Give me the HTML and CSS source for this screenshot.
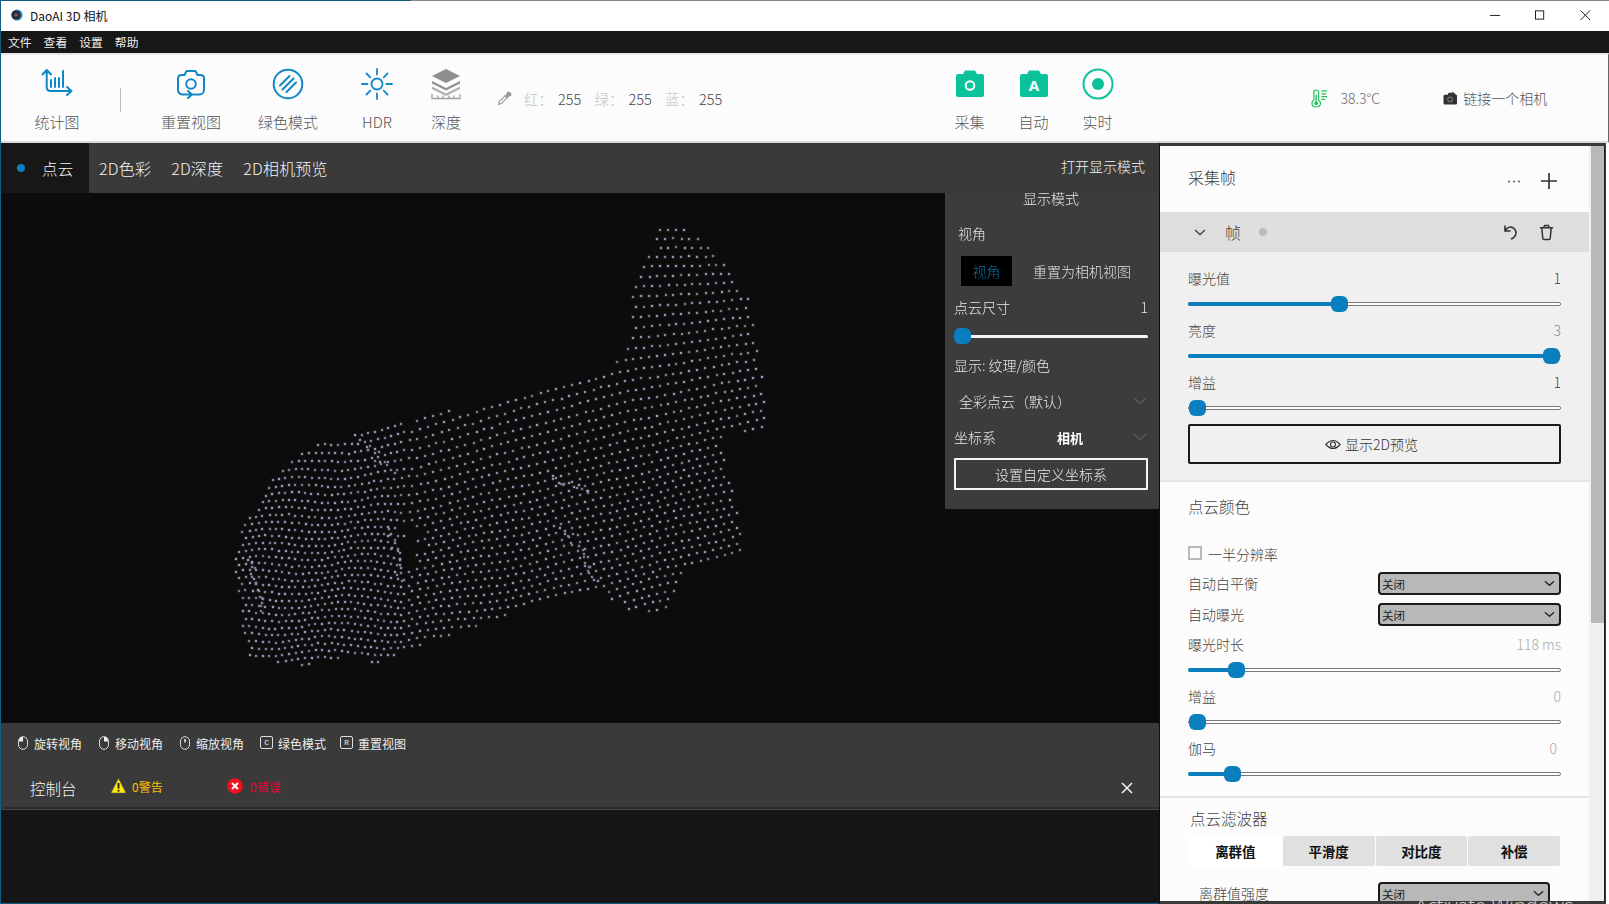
FILE: index.html
```html
<!DOCTYPE html>
<html lang="zh-CN">
<head>
<meta charset="utf-8">
<title>DaoAI 3D 相机</title>
<link rel="stylesheet" href="styles.css">
</head>
<body>
<div class="window">
  <div class="topline"></div>
  <header class="titlebar">
    <svg class="app-icon" viewBox="0 0 12 12"><circle cx="6" cy="6" r="5.5" fill="#1c8ac0"/><circle cx="5" cy="6" r="4.6" fill="#2a2a33"/><circle cx="5" cy="6" r="1.8" fill="#8a5560"/></svg>
    <span class="app-title">DaoAI 3D 相机</span>
    <div class="winctl">
      <svg viewBox="0 0 12 12"><path d="M0 6.5H11" stroke="#111" fill="none"/></svg>
      <svg viewBox="0 0 12 12"><rect x=".5" y="1.500" width="9" height="9" stroke="#111" fill="none"/></svg>
      <svg viewBox="0 0 12 12"><path d="M.5 1L11 11.500M11 1L.5 11.500" stroke="#111" fill="none"/></svg>
    </div>
  </header>
  <nav class="menubar"><span>文件</span><span>查看</span><span>设置</span><span>帮助</span></nav>

  <section class="toolbar">
    <div class="tool tool-chart">
      <svg viewBox="0 0 32 32" class="ico blue"><path d="M1.500 6.500L5.700 2L10 6.500M5.700 2V19Q5.700 23 9.700 23H30M26 19L30.500 23L26 27M10 12V19M14 10V19M18 10V19M22 3V19"/></svg>
      <span>统计图</span>
    </div>
    <div class="tool-sep"></div>
    <div class="tool tool-reset">
      <svg viewBox="0 0 32 32" class="ico blue"><path d="M7 26.500C4.500 26 3 24 3 21.500V10.500C3 8.500 4.500 7 6.500 7H9.500L11.500 3H20.500L22.500 7H25.500C27.500 7 29 8.500 29 10.500V21.500C29 24.500 27 26.500 24.500 26.500H18M8 26.500H16.500M13 23L17 26.500L13 30"/><circle cx="16" cy="16" r="4.800"/></svg>
      <span>重置视图</span>
    </div>
    <div class="tool tool-green">
      <svg viewBox="0 0 32 32" class="ico blue"><circle cx="16" cy="16" r="14.300"/><path d="M8 17.500L17.500 8M10.500 21.500L21.500 10.500M14.500 24L24 14.500"/></svg>
      <span>绿色模式</span>
    </div>
    <div class="tool tool-hdr">
      <svg viewBox="0 0 32 32" class="ico blue thin"><circle cx="16" cy="16" r="5.500"/><path d="M16 1V6.500M16 25.500V31M1 16H6.500M25.500 16H31M5.500 5.500L9.300 9.300M22.700 22.700L26.500 26.500M26.500 5.500L22.700 9.300M9.300 22.700L5.500 26.500"/></svg>
      <span>HDR</span>
    </div>
    <div class="tool tool-depth">
      <svg viewBox="0 0 32 32"><path d="M16 1L30 8L16 15L2 8Z" fill="#8f8f8f"/><path d="M2 13L16 20L30 13V15.500L16 22.500L2 15.500Z" fill="#8f8f8f"/><path d="M2 18.500L16 25.500L30 18.500V21L16 28L2 21Z" fill="#b0b0b0"/><path d="M2 26V30.500H30V26M8 27.500V30M13 27.500V30M19 27.500V30M24 27.500V30" stroke="#a0a0a0" stroke-width="1.300" fill="none"/></svg>
      <span>深度</span>
    </div>
    <div class="rgb">
      <svg viewBox="0 0 16 16" class="dropper"><path d="M1.500 14.500L2.500 11.500L8 6L10 8L4.500 13.500Z" fill="none" stroke="#aaa" stroke-width="1.400"/><path d="M6.500 4.500L8.500 5.500L10.500 1.800C12 .3 15.700 4 14.200 5.500L10.500 7.500L11.500 9.500Z" fill="#999"/></svg>
      <span class="rgb-key rgb-key-first">红：</span><span class="rgb-val">255</span>
      <span class="rgb-key">绿：</span><span class="rgb-val">255</span>
      <span class="rgb-key">蓝：</span><span class="rgb-val">255</span>
    </div>
    <div class="tool tool-capture">
      <svg viewBox="0 0 32 32"><path d="M4 6H9L11 2.500H21L23 6H28Q30 6 30 8V27Q30 29 28 29H4Q2 29 2 27V8Q2 6 4 6Z" fill="#0cc29b"/><circle cx="16" cy="17.500" r="4.300" fill="none" stroke="#fff" stroke-width="2"/></svg>
      <span>采集</span>
    </div>
    <div class="tool tool-auto">
      <svg viewBox="0 0 32 32"><path d="M4 6H9L11 2.500H21L23 6H28Q30 6 30 8V27Q30 29 28 29H4Q2 29 2 27V8Q2 6 4 6Z" fill="#0cc29b"/><text x="16" y="23" class="auto-letter">A</text></svg>
      <span>自动</span>
    </div>
    <div class="tool tool-live">
      <svg viewBox="0 0 32 32"><circle cx="16" cy="16" r="14.500" fill="none" stroke="#0cc29b" stroke-width="2"/><circle cx="16" cy="16" r="6" fill="#0cc29b"/></svg>
      <span>实时</span>
    </div>
    <div class="temp">
      <svg viewBox="0 0 18 20" class="thermo"><path d="M3 3Q3 1 5 1Q8 1 8 3V11.500Q10 13 10 15Q10 19 5.500 19Q1 19 1 15Q1 13 3 11.500Z" fill="none" stroke="#22c35e" stroke-width="1.300"/><path d="M5.500 6V13" stroke="#22c35e" stroke-width="1.500"/><circle cx="5.500" cy="15" r="2" fill="#22c35e"/><path d="M11 2H17M11 5H16M11 8H17M11 11H15" stroke="#22c35e" stroke-width="1.300"/></svg>
      <span>38.3°C</span>
    </div>
    <div class="connect">
      <svg viewBox="0 0 16 15" class="cam-dark"><path d="M2 4H5L6 2H10V0.500L14 4Q15 4 15 5V13Q15 14.500 13.500 14.500H2Q.5 14.500 .5 13V5.500Q.5 4 2 4Z" fill="#333"/><circle cx="7.500" cy="9" r="2.500" fill="none" stroke="#777" stroke-width="1.200"/></svg>
      <span>链接一个相机</span>
    </div>
  </section>

  <main class="main">
    <div class="left">
      <div class="tabs">
        <div class="tab tab-active"><i class="tab-dot"></i><span>点云</span></div>
        <div class="tab">2D色彩</div>
        <div class="tab">2D深度</div>
        <div class="tab">2D相机预览</div>
        <div class="open-mode">打开显示模式</div>
      </div>
      <div class="viewport">
        <canvas id="cloud" width="1158" height="530"></canvas>
        <aside class="mode-panel">
          <div class="mode-title">显示模式</div>
          <div class="mode-view">视角</div>
          <div class="mode-btns"><span class="view-btn">视角</span><span class="reset-cam">重置为相机视图</span></div>
          <div class="mode-size"><span>点云尺寸</span><span>1</span></div>
          <div class="mode-slider"><div class="track track-white"><i class="thumb" style="left:0"></i></div></div>
          <div class="mode-display">显示: 纹理/颜色</div>
          <div class="mode-drop"><span>全彩点云（默认）</span><svg viewBox="0 0 14 8" class="faint-chev"><path d="M1 1L7 6.500L13 1"/></svg></div>
          <div class="mode-coord"><span>坐标系</span><b>相机</b><svg viewBox="0 0 14 8" class="faint-chev"><path d="M1 1L7 6.500L13 1"/></svg></div>
          <div class="mode-custom">设置自定义坐标系</div>
        </aside>
      </div>
      <div class="hints">
        <div class="hint"><svg viewBox="0 0 12 14" class="hint-ico"><rect x="1.500" y=".7" width="9" height="12.600" rx="4.500" fill="none" stroke="#ddd"/><path d="M6 1H4.500Q2 1.500 2 5.500H6Z" fill="#eee"/></svg><span>旋转视角</span></div>
        <div class="hint"><svg viewBox="0 0 12 14" class="hint-ico"><rect x="1.500" y=".7" width="9" height="12.600" rx="4.500" fill="none" stroke="#ddd"/><path d="M6 1H7.500Q10 1.500 10 5.500H6Z" fill="#eee"/></svg><span>移动视角</span></div>
        <div class="hint"><svg viewBox="0 0 12 14" class="hint-ico"><rect x="1.500" y=".7" width="9" height="12.600" rx="4.500" fill="none" stroke="#ddd"/><path d="M6 3V6.500" stroke="#eee" stroke-width="1.500"/></svg><span>缩放视角</span></div>
        <div class="hint hint-k"><b class="key">C</b><span>绿色模式</span></div>
        <div class="hint hint-k"><b class="key">R</b><span>重置视图</span></div>
      </div>
      <div class="console-head">
        <span class="console-title">控制台</span>
        <svg viewBox="0 0 16 16" class="warn-ico"><path d="M8 .5L15.500 15H.5Z" fill="#ffea00" stroke="#666" stroke-width=".6"/><path d="M8 5V10.500M8 11.800V13.500" stroke="#111" stroke-width="1.800"/></svg>
        <span class="warn-text">0警告</span>
        <svg viewBox="0 0 16 16" class="err-ico"><circle cx="8" cy="8" r="7.800" fill="#ee1122"/><path d="M5 5L11 11M11 5L5 11" stroke="#fff" stroke-width="2"/></svg>
        <span class="err-text">0错误</span>
        <svg viewBox="0 0 12 12" class="close-ico"><path d="M1 1L11 11M11 1L1 11"/></svg>
      </div>
      <div class="console-sep"></div>
      <div class="console-body"></div>
    </div>

    <div class="right">
      <div class="panel">
        <div class="p-head"><span>采集帧</span><svg viewBox="0 0 14 3" class="p-dots"><circle cx="2" cy="1.500" r="1"/><circle cx="7" cy="1.500" r="1"/><circle cx="12" cy="1.500" r="1"/></svg><svg viewBox="0 0 16 16" class="p-plus"><path d="M8 0V16M0 8H16"/></svg></div>
        <div class="frame-head">
          <svg viewBox="0 0 12 7" class="frame-chev"><path d="M1 1L6 5.500L11 1"/></svg>
          <span class="frame-name">帧</span>
          <i class="frame-dot"></i>
          <svg viewBox="0 0 18 18" class="frame-undo"><path d="M4 2.500V8H9.500M4.500 7.500C6 4.500 9 3.500 11.500 4.500C15 6 16 10 14 13C13 14.500 11.500 15.500 10 16"/></svg>
          <svg viewBox="0 0 16 18" class="frame-trash"><path d="M1 4H15M5 4L6 1.500H10L11 4M3 4L4 15Q4 16.500 5.500 16.500H10.500Q12 16.500 12 15L13 4"/></svg>
        </div>
        <section class="sec-frame">
          <div class="param"><div class="param-line"><span>曝光值</span><span>1</span></div><div class="track"><i class="fill" style="width:151px"></i><i class="thumb" style="left:142px"></i></div></div>
          <div class="param"><div class="param-line"><span>亮度</span><span class="muted-dark">3</span></div><div class="track"><i class="fill" style="width:363px"></i><i class="thumb" style="left:354px"></i></div></div>
          <div class="param"><div class="param-line"><span>增益</span><span>1</span></div><div class="track"><i class="thumb" style="left:0"></i></div></div>
          <div class="preview-btn"><svg viewBox="0 0 18 12" class="eye"><path d="M1 6Q9 -3 17 6Q9 15 1 6Z"/><circle cx="9" cy="6" r="2.800"/></svg><span>显示2D预览</span></div>
        </section>
        <section class="sec-color">
          <div class="sec-title">点云颜色</div>
          <div class="check-row"><i class="check"></i><span>一半分辨率</span></div>
          <div class="sel-row"><span>自动白平衡</span><div class="sel"><span>关闭</span><svg viewBox="0 0 12 7"><path d="M1 1L6 5.500L11 1"/></svg></div></div>
          <div class="sel-row"><span>自动曝光</span><div class="sel"><span>关闭</span><svg viewBox="0 0 12 7"><path d="M1 1L6 5.500L11 1"/></svg></div></div>
          <div class="param param-first"><div class="param-line"><span>曝光时长</span><span class="muted">118 ms</span></div><div class="track"><i class="fill" style="width:49px"></i><i class="thumb" style="left:39px"></i></div></div>
          <div class="param"><div class="param-line"><span>增益</span><span class="muted">0</span></div><div class="track"><i class="thumb" style="left:0"></i></div></div>
          <div class="param"><div class="param-line"><span>伽马</span><span class="muted val-in">0</span></div><div class="track"><i class="fill" style="width:44px"></i><i class="thumb" style="left:35px"></i></div></div>
        </section>
        <section class="sec-filter">
          <div class="sec-title-sm">点云滤波器</div>
          <div class="ftabs"><span class="ftab ftab-on">离群值</span><span class="ftab">平滑度</span><span class="ftab">对比度</span><span class="ftab">补偿</span></div>
          <div class="sel-row sel-row-in"><span>离群值强度</span><div class="sel"><span>关闭</span><svg viewBox="0 0 12 7"><path d="M1 1L6 5.500L11 1"/></svg></div></div>
        </section>
      </div>
      <div class="scroll"><i class="scroll-thumb"></i></div>
      <div class="activate">Activate Windows</div>
    </div>
  </main>
</div>
<script src="script.js"></script>
</body>
</html>
```

FILE: styles.css
```css
* { box-sizing: border-box; }
html, body { margin: 0; padding: 0; height: 100%; overflow: hidden; background: #fff; }
body { font-family: "Noto Sans CJK SC", "Noto Sans", sans-serif; font-weight: 300; font-size: 14px; color: #444; }
svg { display: block; flex: none; }
.window { width: 1609px; height: 904px; display: flex; flex-direction: column; border-left: 1px solid #155a7f; overflow: hidden; }
.topline { height: 1px; background: linear-gradient(90deg, #155a7f 0 410px, #8a8a8a 410px); }

.titlebar { height: 30px; display: flex; align-items: center; background: #fff; padding: 0 0 2px 10px; }
.app-icon { width: 12px; height: 12px; }
.app-title { margin-left: 7px; font-size: 12px; font-weight: 400; color: #111; }
.winctl { margin-left: auto; display: flex; gap: 34px; margin-right: 18px; }
.winctl svg { width: 11px; height: 12px; }

.menubar { height: 22px; background: #171717; color: #f0f0f0; display: flex; align-items: center; gap: 12px; padding: 0 0 2px 7px; font-size: 11.800px; font-weight: 400; }

.toolbar { height: 90px; background: #fcfcfc; border-top: 2px solid #e6e6e6; border-bottom: 2px solid #dadada; border-right: 1px solid #666; display: flex; color: #555; position: relative; }
.tool { display: flex; flex-direction: column; align-items: center; width: 60px; padding-top: 13px; font-size: 15px; }
.tool svg { width: 32px; height: 32px; }
.tool span { margin-top: 10px; line-height: 24px; white-space: nowrap; }
.ico { fill: none; stroke-width: 2; stroke-linecap: round; stroke-linejoin: round; }
.ico.blue { stroke: #1088c8; }
.ico.thin { stroke-width: 1.800; }
.tool-chart { margin-left: 26px; }
.tool-sep { width: 1px; height: 24px; background: #bbb; margin: 33px 0 0 33px; }
.tool-reset { margin-left: 40px; }
.tool-green { margin-left: 37px; }
.tool-hdr { margin-left: 29px; }
.tool-depth { margin-left: 9px; }
.rgb { display: flex; align-items: center; height: 90px; margin-top: -2px; margin-left: 21px; font-size: 14.500px; }
.dropper { width: 16px; height: 16px; }
.rgb-key { color: #c4c4c4; width: 30px; }
.rgb-key-first { margin-left: 11px; }
.rgb-val { color: #444; width: 40.500px; padding-left: 4px; }
.tool-capture { margin-left: 204px; margin-right: 4px; }
.tool-auto { margin-right: 4px; }
.temp { display: flex; align-items: center; height: 86px; margin-left: 183px; gap: 13px; font-size: 14px; color: #666; }
.thermo { width: 17px; height: 19px; }
.connect { display: flex; align-items: center; height: 86px; margin-left: 63px; gap: 5px; font-size: 14px; color: #555; }
.cam-dark { width: 15px; height: 14px; }
.auto-letter { font-size: 15px; font-weight: 700; fill: #fff; text-anchor: middle; font-family: "Noto Sans", sans-serif; }

.main { flex: 1; display: flex; min-height: 0; }
.left { width: 1158px; display: flex; flex-direction: column; background: #3a3a3a; flex: none; }
.tabs { height: 50px; display: flex; align-items: center; background: #3a3a3a; color: #f4f4f4; font-size: 16px; letter-spacing: .2px; }
.tab { padding: 0 10px; line-height: 50px; height: 50px; white-space: nowrap; }
.tab-active { width: 88px; background: #171717; display: flex; align-items: center; padding: 0 0 0 16px; font-size: 15.500px; }
.tab-dot { width: 8px; height: 8px; background: #0a7fc4; border-radius: 50%; margin-right: 17px; }
.open-mode { margin-left: auto; margin-right: 14px; font-size: 14px; margin-top: -5px; letter-spacing: 0; }
.viewport { position: relative; height: 530px; background: #0c0c0c; }
#cloud { display: block; }
.mode-panel { position: absolute; right: -1px; top: 0; width: 215px; height: 316px; background: #3c3c3c; color: #e8e8e8; font-size: 14px; padding: 0 12px 0 9px; }
.mode-title { height: 29px; margin-top: -2px; line-height: 14px; text-align: center; }
.mode-view { height: 26px; line-height: 26px; padding-left: 4px; }
.mode-btns { display: flex; align-items: center; height: 30px; margin-top: 10px; padding-left: 7px; }
.view-btn { width: 51px; height: 30px; line-height: 30px; text-align: center; background: #000; color: #0a6ea8; }
.reset-cam { margin-left: 21px; color: #e0e0e0; }
.mode-size { display: flex; justify-content: space-between; margin-top: 7px; line-height: 28px; height: 28px; }
.mode-slider { height: 16px; margin-top: 7px; display: flex; align-items: center; }
.mode-display { margin-top: 3px; height: 30px; line-height: 36px; }
.mode-drop { height: 36px; margin-top: 3px; padding: 6px 0 0 5px; display: flex; align-items: center; justify-content: space-between; }
.mode-coord { height: 36px; margin-top: 3px; display: flex; align-items: center; }
.mode-coord b { margin-left: 61px; font-size: 13px; font-weight: 700; color: #fff; }
.faint-chev { width: 14px; height: 8px; fill: none; stroke: #5e5e5e; stroke-width: 1.200; margin-left: auto; margin-right: 1px; }
.mode-custom { height: 32px; margin-top: 3px; border: 2px solid #f4f4f4; text-align: center; line-height: 28px; border-radius: 1px; }

.hints { height: 44px; display: flex; align-items: center; padding: 0 0 4px 16px; color: #eee; font-size: 12px; font-weight: 400; background: #3a3a3a; }
.hint { display: flex; align-items: center; margin-right: 16px; height: 16px; }
.hint-ico { width: 12px; height: 14px; margin-right: 5px; margin-top: -1px; }
.hint-k { margin-right: 14px; }
.key { width: 13px; height: 13px; border: 1px solid #ddd; border-radius: 2px; font-size: 8px; line-height: 11px; text-align: center; margin: -1px 5px 0 0; font-family: "Liberation Mono", monospace; font-weight: 400; }
.console-head { height: 40px; display: flex; align-items: center; padding: 2px 0 0 29px; color: #f4f4f4; }
.console-title { font-size: 15.500px; width: 80px; }
.warn-ico { width: 17px; height: 16px; margin-top: -5px; }
.warn-text { color: #ffc000; font-size: 12px; margin-left: 5px; width: 95px; font-weight: 400; margin-top: -3px; }
.err-ico { width: 16px; height: 16px; margin-top: -5px; }
.err-text { color: #ee0033; font-size: 12px; margin-left: 7px; font-weight: 400; margin-top: -3px; }
.close-ico { width: 12px; height: 12px; fill: none; stroke: #f4f4f4; stroke-width: 1.500; margin-left: auto; margin-right: 26px; }
.console-sep { height: 3px; background: #2a2a2a; border-bottom: 1px solid #4a4a4a; margin-left: 3px; }
.console-body { flex: 1; background: #161616; border-bottom: 1px solid #155a7f; }

.right { flex: 1; position: relative; display: flex; background: #3a3a3a; border-left: 1px solid #111; padding: 3px 4px 3px 0; overflow: hidden; border-right: 3px solid #fff; }
.panel { width: 429px; background: #fcfcfc; overflow: hidden; flex: none; }
.p-head { height: 66px; display: flex; align-items: center; padding: 0 32px 0 28px; font-size: 16px; color: #333; }
.p-head > span:first-child { margin-top: -4px; }
.p-dots { width: 14px; height: 3px; margin-left: auto; margin-right: 20px; fill: #555; margin-top: 5px; }
.p-plus { width: 16px; height: 16px; fill: none; stroke: #333; stroke-width: 1.700; margin-top: 4px; }
.frame-head { height: 40px; background: #dedede; display: flex; align-items: center; color: #444; font-size: 16px; }
.frame-chev { width: 12px; height: 7px; margin-left: 34px; fill: none; stroke: #444; stroke-width: 1.400; }
.frame-name { margin-left: 19px; }
.frame-dot { width: 8px; height: 8px; background: #bbb; border-radius: 50%; margin-left: 18px; }
.frame-undo { width: 18px; height: 18px; margin-left: auto; fill: none; stroke: #333; stroke-width: 1.600; }
.frame-trash { width: 15px; height: 17px; margin-left: 20px; margin-right: 35px; fill: none; stroke: #333; stroke-width: 1.600; }
.sec-frame { background: #f0f0f0; padding: 14px 28px 16px; border-bottom: 2px solid #e4e4e4; height: 230px; }
.param { height: 52px; }
.param-line { display: flex; justify-content: space-between; height: 26px; line-height: 24px; color: #444; }
.muted { color: #aaa; }
.muted-dark { color: #888; }
.val-in { margin-right: 4px; }
.track { position: relative; height: 4px; margin-top: 10px; border: 1px solid #777; border-radius: 2px; background: #fff; }
.track-white { flex: 1; margin-top: 0; height: 3px; background: #f4f4f4; border: 0; }
.fill { position: absolute; left: -1px; top: -1px; height: 4px; background: #0a7fc0; border-radius: 2px; }
.thumb { position: absolute; top: 50%; width: 17px; height: 16px; margin-top: -8px; background: #0a7fc0; border-radius: 6px; }
.preview-btn { height: 40px; margin-top: 2px; padding-right: 6px; border: 2px solid #1a1a1a; border-radius: 2px; display: flex; align-items: center; justify-content: center; gap: 4px; color: #333; }
.eye { width: 16px; height: 11px; fill: none; stroke: #333; stroke-width: 1.300; }
.sec-color { padding: 0 28px; height: 316px; border-bottom: 2px solid #e4e4e4; }
.sec-title { height: 52px; line-height: 49px; font-size: 15.500px; color: #444; }
.check-row { height: 28px; margin-top: 6px; display: flex; align-items: center; gap: 6px; }
.check { width: 14px; height: 14px; border: 2px solid #bbb; margin-top: -2px; }
.sel-row { height: 31px; display: flex; align-items: center; justify-content: space-between; }
.sel-row > span { margin-top: -2px; }
.sel { width: 183px; height: 23px; background: #b8b8b8; border: 2px solid #1a1a1a; border-radius: 4px; display: flex; align-items: center; justify-content: space-between; padding: 0 4px 0 2px; font-size: 11.500px; color: #222; font-weight: 400; }
.sel svg { width: 11px; height: 7px; fill: none; stroke: #222; stroke-width: 1.400; }
.param-first { margin-top: 2px; }
.sec-filter { padding: 0 28px; }
.sec-title-sm { height: 38px; padding: 5px 0 0 2px; line-height: 30px; font-size: 15.500px; color: #444; }
.ftabs { display: grid; grid-template-columns: repeat(4, 1fr); height: 30px; margin: 0 1px; color: #111; font-weight: 700; font-size: 13.500px; }
.ftab { background: #e0e0e0; text-align: center; line-height: 30px; border-radius: 2px; margin-left: 1px; }
.ftab-on { background: #fff; margin-left: 0; }
.sel-row-in { margin-top: 16px; padding-left: 11px; margin-right: 11px; height: 23px; color: #444; }
.sel-row-in .sel { width: 172px; }
.scroll { width: 16px; background: #f0f0f0; flex: none; position: relative; border-right: 1px solid #222; }
.scroll-thumb { display: block; width: 13px; height: 477px; background: #b8b8b8; margin-left: 2px; }
.activate { position: absolute; left: 255px; bottom: -15px; font-size: 20px; color: #c8c8c8; font-family: "Noto Sans", sans-serif; white-space: nowrap; }
```

FILE: script.js
```js
(function () {
  var cv = document.getElementById('cloud');
  var ctx = cv.getContext('2d');
  var OX = 1, OY = 193;
  var poly = [[657,223],[663,221],[672,227],[694,231],[703,237],[714,250],[726,262],[738,283],[748,297],[754,332],[757,348],[762,374],[764,392],[767,400],[763,424],[766,433],[722,427],[720,440],[730,483],[737,510],[744,553],[690,568],[669,598],[672,612],[627,612],[608,597],[598,588],[513,612],[480,623],[462,630],[420,645],[380,660],[370,664],[357,652],[312,664],[283,664],[247,655],[243,638],[240,603],[232,564],[240,532],[257,499],[273,476],[290,457],[315,442],[339,436],[357,434],[397,423],[430,415],[478,402],[502,395],[572,377],[610,366],[617,356],[626,341],[629,316],[630,293],[636,284],[642,267],[647,257],[653,248],[652,232]];
  var seed = 12345;
  function rnd() {
    seed = (seed * 1664525 + 1013904223) >>> 0;
    return seed / 4294967296;
  }
  function inside(x, y) {
    var c = false;
    for (var i = 0, j = poly.length - 1; i < poly.length; j = i++) {
      var a = poly[i], b = poly[j];
      if ((a[1] > y) !== (b[1] > y) && x < (b[0] - a[0]) * (y - a[1]) / (b[1] - a[1]) + a[0]) c = !c;
    }
    return c;
  }
  function sm(a, b, v) {
    var t = Math.max(0, Math.min(1, (v - a) / (b - a)));
    return t * t * (3 - 2 * t);
  }
  function hUp(x) {
    var e = Math.min(x, 625) - 222;
    return -0.28 * e + (x > 625 ? 0.01 * (x - 625) : 0);
  }
  function hLow(x) {
    var a = -0.02 * (Math.min(x, 400) - 222);
    return a + (x > 400 ? -0.25 * (x - 400) : 0);
  }
  function dot(x, y) {
    var k = rnd();
    var r = Math.round(118 + 40 * k), g = Math.round(112 + 40 * k), b = Math.round(138 + 45 * k);
    var ix = Math.round(x - OX), iy = Math.round(y - OY);
    ctx.fillStyle = 'rgb(' + r + ',' + g + ',' + b + ')';
    ctx.globalAlpha = 0.4;
    ctx.fillRect(ix - 0.5, iy - 0.5, 3, 3);
    ctx.globalAlpha = 1;
    ctx.fillRect(ix, iy, 2, 2);
  }
  var row = 0;
  for (var y0 = 300; y0 < 720; y0 += 6.8, row++) {
    var m = sm(340, 540, y0);
    var x = 222 + (row % 2) * 3;
    while (x < 780) {
      x += x < 400 ? 6.6 : 8;
      var y = y0 + hUp(x) * (1 - m) + hLow(x) * m + (y0 - 500) * 0.15 * sm(350, 550, x);
      var amp = x < 410 ? 2.4 : (y > 470 ? 1 : 0.3);
      var px = x + (rnd() - 0.5) * 0.9;
      var py = y + amp * Math.sin(x / 17 + y0 / 38) + (rnd() - 0.5) * 0.8;
      if (!inside(px, py)) continue;
      if (px > 397 && px < 421 && py > 523 && py < 568 && rnd() < 0.82) continue;
      dot(px, py);
    }
  }
  var seams = [
    [[388, 528], [395, 556], [401, 578]],
    [[563, 527], [580, 552], [597, 582]],
    [[548, 476], [566, 484], [590, 491]],
    [[362, 440], [375, 455], [392, 470]],
    [[250, 556], [258, 585], [262, 612]]
  ];
  seams.forEach(function (s) {
    for (var i = 0; i < 2; i++) {
      var a = s[i], b = s[i + 1];
      var len = Math.hypot(b[0] - a[0], b[1] - a[1]);
      for (var d = 0; d < len; d += 4.5) {
        var t = d / len;
        dot(a[0] + (b[0] - a[0]) * t + (rnd() - 0.5) * 9, a[1] + (b[1] - a[1]) * t + (rnd() - 0.5) * 6);
      }
    }
  });
})();
```
